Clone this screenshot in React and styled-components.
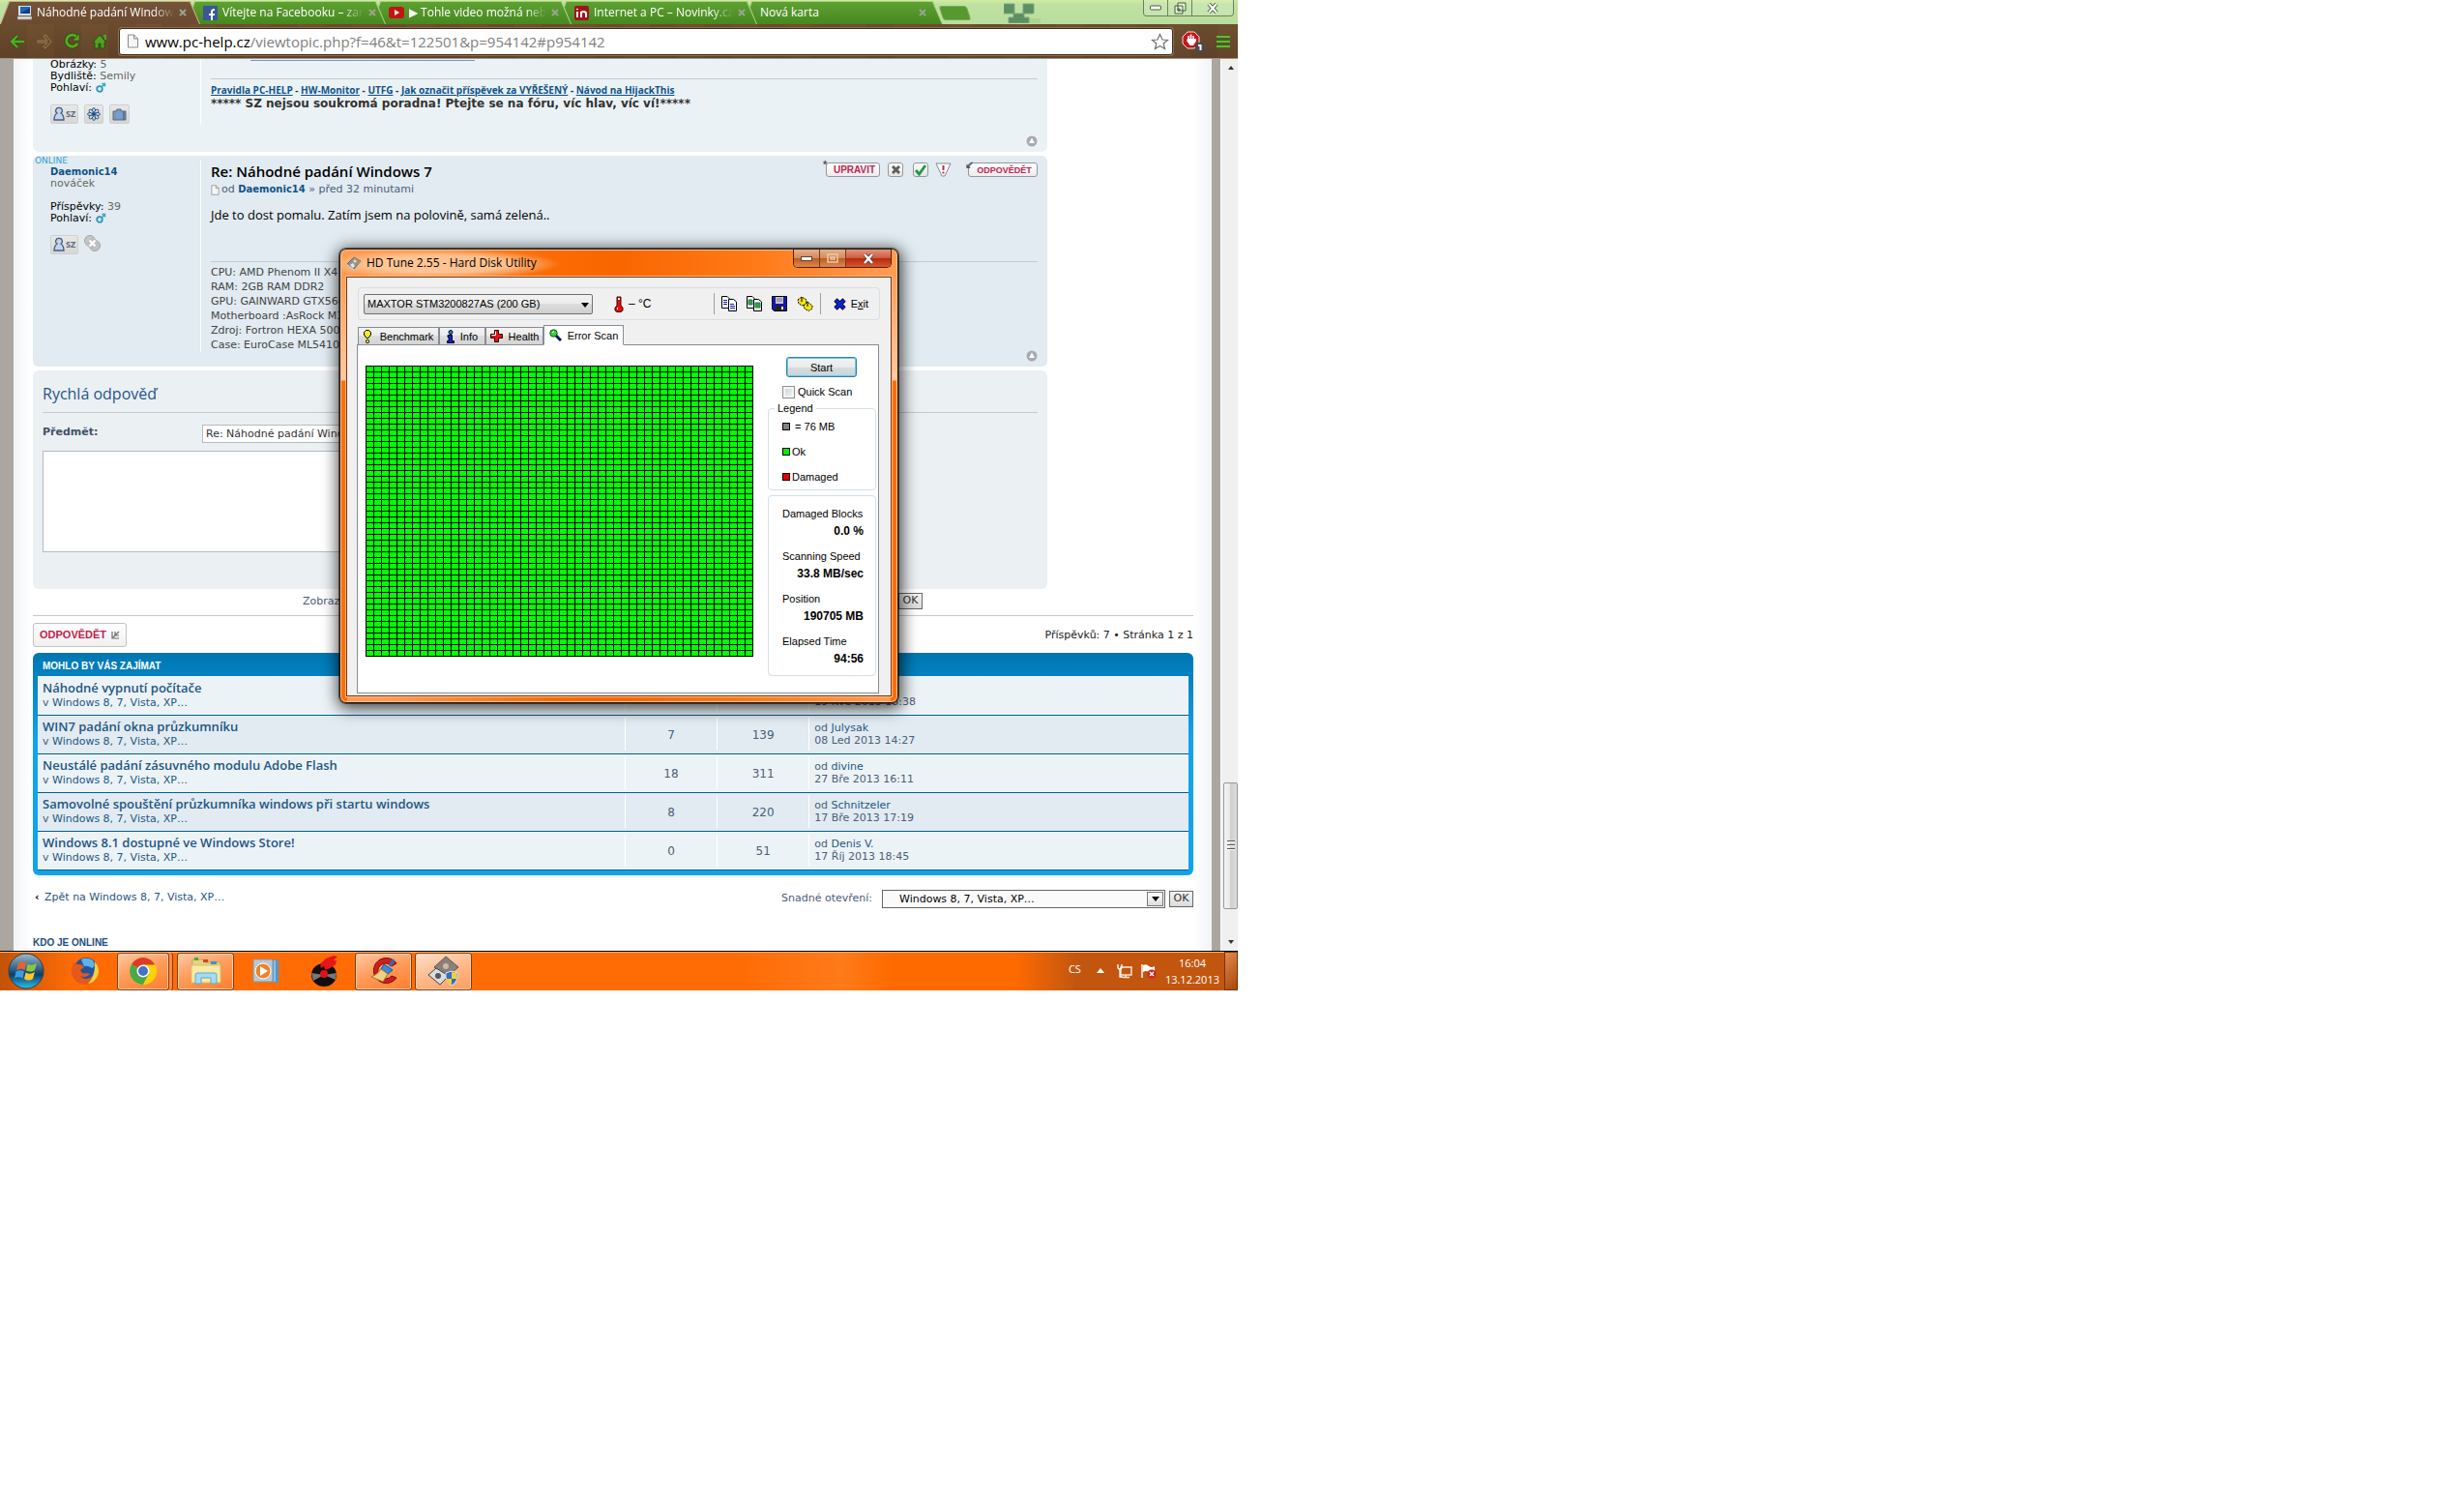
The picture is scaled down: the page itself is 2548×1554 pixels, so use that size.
import React from 'react';
import styled, { createGlobalStyle } from 'styled-components';

const verdana = '"DejaVu Sans", Verdana, sans-serif';
const segoe = '"Open Sans", "Noto Sans", sans-serif';
const arial = '"Liberation Sans", Arial, sans-serif';

const tabs = [
    { title: 'Náhodné padání Window', icon: 'pc', active: true },
    { title: 'Vítejte na Facebooku – zar', icon: 'facebook' },
    { title: '▶ Tohle video možná neb', icon: 'youtube' },
    { title: 'Internet a PC – Novinky.cz', icon: 'novinky' },
    { title: 'Nová karta' },
];

const topics = [
    { title: 'Náhodné vypnutí počítače', replies: '', views: '', author: '', date: '19 Kvě 2013 18:38' },
    { title: 'WIN7 padání okna průzkumníku', replies: 7, views: 139, author: 'Julysak', date: '08 Led 2013 14:27' },
    { title: 'Neustálé padání zásuvného modulu Adobe Flash', replies: 18, views: 311, author: 'divine', date: '27 Bře 2013 16:11' },
    { title: 'Samovolné spouštění průzkumníka windows při startu windows', replies: 8, views: 220, author: 'Schnitzeler', date: '17 Bře 2013 17:19' },
    { title: 'Windows 8.1 dostupné ve Windows Store!', replies: 0, views: 51, author: 'Denis V.', date: '17 Říj 2013 18:45' },
];

const stats = [
    ['Damaged Blocks', '0.0 %'],
    ['Scanning Speed', '33.8 MB/sec'],
    ['Position', '190705 MB'],
    ['Elapsed Time', '94:56'],
];

/* ---------- icons ---------- */

const TabIcon = ({ name }) => {
    if (name === 'pc') {
        return (
            <svg width="15" height="16" viewBox="0 0 15 16">
                <rect x="1" y="1" width="13" height="10" fill="#d8dde2" />
                <rect x="3" y="2" width="10" height="7" fill="#1d66b8" />
                <path d="M3 9L13 3V9Z" fill="#0d3f86" />
                <path d="M0 12H15V15H0Z" fill="#e8e8e8" stroke="#8c8c8c" />
            </svg>
        );
    }
    if (name === 'facebook') {
        return (
            <svg width="15" height="15" viewBox="0 0 15 15">
                <rect width="15" height="15" fill="#3a5896" />
                <path d="M9 15V9H12M6 9H9M9 9V6Q9 4 12 4" stroke="#fff" strokeWidth="2" fill="none" />
            </svg>
        );
    }
    if (name === 'youtube') {
        return (
            <svg width="16" height="14" viewBox="0 0 16 14">
                <rect y="1" width="16" height="12" rx="3" fill="#c4140f" />
                <path d="M6 4L11 7L6 10Z" fill="#fff" />
            </svg>
        );
    }
    return (
        <svg width="15" height="15" viewBox="0 0 15 15">
            <rect width="15" height="15" rx="2" fill="#a01520" />
            <path d="M3 6V12M3 3V4M7 12V6M7 8Q7 6 9 6Q12 6 12 8V12" stroke="#fff" strokeWidth="2" fill="none" />
        </svg>
    );
};

const TabCloseIcon = () => (
    <svg width="8" height="8" viewBox="0 0 8 8">
        <path d="M1 1L7 7M7 1L1 7" stroke="#98a590" strokeWidth="2" />
    </svg>
);
const BackIcon = () => (
    <svg width="16" height="16" viewBox="0 0 16 16">
        <path d="M8 2L2 8L8 14M2 8H15" stroke="#2b4d12" strokeWidth="4" fill="none" />
        <path d="M8 2L2 8L8 14M2 8H15" stroke="#55ab23" strokeWidth="2.4" fill="none" />
    </svg>
);
const ForwardIcon = () => (
    <svg width="16" height="16" viewBox="0 0 16 16">
        <path d="M1 7H11L7 2.500L9 1L15 8L9 15L7 13.500L11 9H1Z" stroke="#9a8058" fill="none" />
    </svg>
);
const ReloadIcon = () => (
    <svg width="17" height="17" viewBox="0 0 17 17">
        <path d="M13 4A6 6 0 1 0 14 11" stroke="#2b4d12" strokeWidth="4.4" fill="none" />
        <path d="M13 4A6 6 0 1 0 14 11" stroke="#55ab23" strokeWidth="2.8" fill="none" />
        <path d="M16 1V8H9Z" fill="#55ab23" stroke="#2b4d12" strokeWidth="0.6" />
    </svg>
);
const HomeIcon = () => (
    <svg width="16" height="16" viewBox="0 0 16 16">
        <path d="M8 1L15 9H13V15H9V10H7V15H3V9H1Z" fill="#4fa321" stroke="#2b4d12" />
        <path d="M12 2H14V6" stroke="#4fa321" strokeWidth="2" fill="none" />
    </svg>
);
const SheetIcon = ({ size }) => (
    <svg width={size} height={size + 2} viewBox="0 0 12 15">
        <path d="M1 1H7L11 5V14H1Z" fill="#f6f6f6" stroke="#8a8a8a" />
        <path d="M7 1V5H11" fill="none" stroke="#8a8a8a" />
    </svg>
);
const StarIcon = () => (
    <svg width="19" height="18" viewBox="0 0 19 18">
        <path d="M9.5 1.5L12 7L17.5 7.4L13.2 11L14.6 16.5L9.5 13.4L4.4 16.5L5.8 11L1.5 7.4L7 7Z" fill="#fff" stroke="#707070" strokeWidth="1.2" />
    </svg>
);
const BlockIcon = () => (
    <svg width="24" height="22" viewBox="0 0 24 22">
        <path d="M6 1H13L18 6V13L13 18H6L1 13V6Z" fill="#c8151b" stroke="#f2dcdc" />
        <path d="M7 9V5M9.500 9V3.500M12 9V5M14 11V8" stroke="#fff" strokeWidth="1.600" />
        <path d="M6 8H14.500V11L12 15H8.500L5 10Z" fill="#fff" />
        <rect x="14" y="12" width="10" height="10" rx="1" fill="#4a4a4a" />
        <path d="M17 15H19.500V20" stroke="#fff" strokeWidth="2" fill="none" />
    </svg>
);
const MenuIcon = () => (
    <svg width="14" height="16" viewBox="0 0 14 16">
        <path d="M0 3H14M0 8H14M0 13H14" stroke="#2b4d12" strokeWidth="4" />
        <path d="M0 3H14M0 8H14M0 13H14" stroke="#69b536" strokeWidth="2.4" />
    </svg>
);
const CreeperFace = () => (
    <svg width="38" height="21" viewBox="0 0 38 21">
        <path d="M38 16H18V21H38Z" fill="#a9cf8a" opacity="0.7" />
        <path d="M0 1H11V11H0ZM20 1H31V11H20ZM10 11H21V15H26V21H5V15H10Z" fill="#5c8f62" stroke="#7ea47e" />
    </svg>
);

const MaleIcon = () => (
    <svg width="11" height="11" viewBox="0 0 11 11">
        <circle cx="4" cy="7" r="2.800" fill="none" stroke="#2c93bd" strokeWidth="1.800" />
        <path d="M6 5L9.500 1.500M6.500 1.500H9.500V4.500" fill="none" stroke="#3aa7cf" strokeWidth="1.500" />
    </svg>
);
const PersonIcon = () => (
    <svg width="12" height="16" viewBox="0 0 12 16">
        <path d="M6 1.500A3 3 0 0 1 8 7Q11 9 11 14H1Q1 9 4 7A3 3 0 0 1 6 1.500Z" fill="#c3d4e8" stroke="#3f5f88" strokeWidth="1.300" />
    </svg>
);
const FlowerIcon = () => (
    <svg width="14" height="14" viewBox="0 0 14 14">
        {[0, 45, 90, 135, 180, 225, 270, 315].map((a) => (
            <ellipse key={a} cx="7" cy="3" rx="1.500" ry="2.400" fill="#cfdff0" stroke="#1f4677" strokeWidth="0.9" transform={`rotate(${a} 7 7)`} />
        ))}
        <circle cx="7" cy="7" r="1.400" fill="#1f4677" />
    </svg>
);
const CameraIcon = () => (
    <svg width="15" height="13" viewBox="0 0 15 13">
        <path d="M1 3H4L5 1H9L10 3H14V12H1Z" fill="#7f95b5" stroke="#5b6a80" />
        <circle cx="7" cy="7" r="3.500" fill="#6fa0dc" />
        <path d="M12 3V12" stroke="#46566e" />
    </svg>
);
const SkypeIcon = () => (
    <svg width="17" height="17" viewBox="0 0 17 17">
        <circle cx="6" cy="6" r="5.500" fill="#c7c7c7" stroke="#a5a5a5" />
        <circle cx="11" cy="11" r="5.500" fill="#c2c2c2" stroke="#a5a5a5" />
        <circle cx="8.500" cy="8.500" r="5.500" fill="#bdbdbd" />
        <path d="M5.500 5.500L11.500 11.500M11.500 5.500L5.500 11.500" stroke="#fff" strokeWidth="2.200" />
    </svg>
);
const TopIcon = () => (
    <svg width="12" height="12" viewBox="0 0 12 12">
        <circle cx="6" cy="6" r="5.500" fill="#a7abb0" />
        <path d="M6 2.500L9 8H3Z" fill="#fff" />
    </svg>
);
const CrossIcon = () => (
    <svg width="9" height="9" viewBox="0 0 9 9">
        <path d="M1 1L8 8M8 1L1 8" stroke="#5e5e5e" strokeWidth="3" />
    </svg>
);
const CheckIcon = () => (
    <svg width="12" height="12" viewBox="0 0 12 12">
        <path d="M1 6L4.500 10L11 1" stroke="#1f9a45" strokeWidth="2.800" fill="none" />
    </svg>
);
const ReportIcon = () => (
    <svg width="17" height="15" viewBox="0 0 17 15">
        <path d="M1 1H16L10 14H7Z" fill="#fff" stroke="#8b8b8b" strokeLinejoin="round" />
        <path d="M8.500 3V8M8.500 9.500V11.500" stroke="#c22552" strokeWidth="2" />
    </svg>
);
const ReplyArrow = () => (
    <svg width="9" height="9" viewBox="0 0 9 9">
        <path d="M1 1V8H8M2 7L8 1M4 1V5H8" stroke="#6d6d6d" fill="none" strokeWidth="1.200" />
    </svg>
);
const DownArrow = () => (
    <svg width="8" height="5" viewBox="0 0 8 5">
        <path d="M0 0H8L4 5Z" fill="#000" />
    </svg>
);
const DiskIcon = ({ size }) => (
    <svg width={size} height={size} viewBox="0 0 16 16">
        <path d="M1 9L8 2L15 6L8 14Z" fill="#8d9695" stroke="#5e6768" />
        <path d="M8 2L15 6L12 10L5 6Z" fill="#a98d78" />
        <circle cx="9" cy="6" r="1.500" fill="#e3ddd8" />
        <path d="M1 9L8 14V16L1 11Z" fill="#c5cdce" />
        <path d="M4 10L7 8L9 11L7 13Z" fill="#e4e9ea" />
    </svg>
);
const ThermoIcon = () => (
    <svg width="10" height="17" viewBox="0 0 10 17">
        <path d="M3 1H7V10L9 12V15L7 16.500H3L1 15V12L3 10Z" fill="#e01010" stroke="#400" />
        <path d="M4 2H6V4H4ZM3 12H4V14H3Z" fill="#fff" />
    </svg>
);
const CopyIcon = ({ picture }) => (
    <svg width="16" height="16" viewBox="0 0 16 16">
        <path d="M.5 .5H6L8.500 3V12.500H.5Z" fill="#fff" stroke="#000" />
        <path d="M7.500 3.500H12.500L15.500 6V15.500H7.500Z" fill="#fff" stroke="#000" />
        {picture ? (
            <path d="M2 4H6V9H2ZM9 7H14V12H9Z" fill="#35a33c" stroke="#2a7d5a" />
        ) : (
            <path d="M2 4.500H6M2 6.500H6M2 8.500H6M9 8.500H13M9 10.500H14M9 12.500H14" stroke="#1414a8" />
        )}
    </svg>
);
const SaveIcon = () => (
    <svg width="16" height="16" viewBox="0 0 16 16">
        <path d="M.5 .5H15.500V15.500H2.500L.5 13.500Z" fill="#1414b8" stroke="#000" />
        <rect x="4" y="1" width="8" height="7" fill="#c9c9c9" />
        <path d="M5 3H11M5 5H11" stroke="#777" />
        <rect x="4" y="10" width="9" height="5" fill="#222" />
        <rect x="10" y="11" width="2" height="3" fill="#fff" />
    </svg>
);
const OptionsIcon = () => (
    <svg width="17" height="16" viewBox="0 0 17 16">
        <path d="M1 4L5 1L10 4V8L6 10L2 8Z" fill="#f2e415" stroke="#000" strokeDasharray="2 1" />
        <path d="M7 10L11 6L16 10V13L12 15.500L8 13Z" fill="#f2e415" stroke="#000" strokeDasharray="2 1" />
        <path d="M5 1V6M11 6V11" stroke="#000" />
    </svg>
);
const ExitIcon = () => (
    <svg width="13" height="13" viewBox="0 0 13 13">
        <path d="M2 2L11 11M11 2L2 11" stroke="#000" strokeWidth="4.600" />
        <path d="M2 2L11 11M11 2L2 11" stroke="#0b22d8" strokeWidth="3" />
    </svg>
);
const BulbIcon = () => (
    <svg width="8" height="14" viewBox="0 0 8 14">
        <path d="M2.500 .5H5.500L7.500 2.500V5L5 8.500H3L.5 5V2.500Z" fill="#f6ec1d" stroke="#000" />
        <rect x="2.500" y="10.500" width="3" height="3" rx="1" fill="#f6ec1d" stroke="#000" />
    </svg>
);
const InfoIcon = () => (
    <svg width="8" height="14" viewBox="0 0 8 14">
        <circle cx="4" cy="2.500" r="2" fill="#1c8ed8" stroke="#002" />
        <path d="M1 5.500H5.500V11.500H7.500V13.500H.5V11.500H2V7.500H1Z" fill="#1420c8" stroke="#002" />
    </svg>
);
const HealthIcon = () => (
    <svg width="13" height="13" viewBox="0 0 13 13">
        <path d="M4.500 .5H8.500V4.500H12.500V8.500H8.500V12.500H4.500V8.500H.5V4.500H4.500Z" fill="#df1414" stroke="#300" />
        <path d="M5.500 1.500V5.500H1.500" stroke="#fff" fill="none" />
    </svg>
);
const ScanIcon = () => (
    <svg width="13" height="13" viewBox="0 0 13 13">
        <path d="M7 7L12 12" stroke="#0a1460" strokeWidth="3" />
        <circle cx="4.500" cy="4.500" r="3.700" fill="#32d23c" stroke="#0d4f12" />
        <path d="M3 4L5 2.500" stroke="#fff" />
    </svg>
);

/* ---------- taskbar icons ---------- */

const StartOrb = () => (
    <svg width="38" height="38" viewBox="0 0 38 38">
        <defs>
            <linearGradient id="orb" x1="0" y1="0" x2="0" y2="1">
                <stop offset="0" stopColor="#9fb8c8" />
                <stop offset="0.45" stopColor="#2f5f86" />
                <stop offset="0.6" stopColor="#0c3d68" />
                <stop offset="1" stopColor="#28c3ee" />
            </linearGradient>
        </defs>
        <circle cx="19" cy="19" r="18" fill="url(#orb)" stroke="#333b44" />
        <path d="M11 11Q15 8 19 11L17.500 18Q14 15 9 18Z" fill="#e8622a" />
        <path d="M20.500 12Q25 14 30 11L28 18Q24 21 19 18.500Z" fill="#8cc63f" />
        <path d="M8.500 19.500Q13 17 17 19.500L15.500 26.500Q11 24 7 26.500Z" fill="#3f9be0" />
        <path d="M18.500 20.500Q23 23 28 20L26 27Q22 30 17 27Z" fill="#fcc62b" />
    </svg>
);
const FirefoxIcon = () => (
    <svg width="30" height="30" viewBox="0 0 30 30">
        <circle cx="16" cy="13" r="12" fill="#24559c" />
        <path d="M11 3Q17 0 23 4Q27 10 22 12Q18 9 14 10Q12 6 11 3Z" fill="#5fb3e4" />
        <path d="M3 6Q5 8 8 8Q12 8 14 11L10 14Q12 19 17 17L20 18Q16 23 10 20Q14 25 20 22Q27 18 26 6Q31 14 28 21Q24 29 15 29Q3 28 1 17Q1 10 3 6Z" fill="#e4591a" />
        <path d="M25 5Q31 13 28 20Q25 27 18 28Q26 20 25 5Z" fill="#f6cf45" />
    </svg>
);
const ChromeIcon = () => (
    <svg width="30" height="30" viewBox="0 0 30 30">
        <circle cx="15" cy="15" r="14" fill="#fcd209" />
        <path d="M15 15L2.900 8A14 14 0 0 1 27.100 8Z" fill="#db3b2b" />
        <path d="M15 15L2.900 8A14 14 0 0 0 15 29L21 18Z" fill="#4aa84a" />
        <path d="M15 8H27.100L22 16Z" fill="#db3b2b" />
        <path d="M15 15L21 18L15 29A14 14 0 0 0 27.300 8.500H15Z" fill="#fcd209" />
        <circle cx="15" cy="15" r="6.500" fill="#fff" />
        <circle cx="15" cy="15" r="5" fill="#3f74c4" />
    </svg>
);
const FolderIcon = () => (
    <svg width="34" height="30" viewBox="0 0 34 30">
        <path d="M3 3H14L16 6H32V26H2Z" fill="#e9d27c" stroke="#c3a850" />
        <path d="M5 1H9V4H5Z" fill="#3fae49" />
        <path d="M14 3H19V6H14Z" fill="#d8402c" />
        <path d="M22 5H28V8H22Z" fill="#3f8fd6" />
        <path d="M2 9H32V27H2Z" fill="#f8eaa6" stroke="#d7c06c" />
        <path d="M6 28V19Q6 17 8 17H26Q28 17 28 19V28H22V22H12V28Z" fill="#a9daf3" stroke="#5aa9d3" />
    </svg>
);
const MediaIcon = () => (
    <svg width="28" height="26" viewBox="0 0 28 26">
        <path d="M18 2L27 1V25L18 24Z" fill="#4f98cf" />
        <path d="M20 2V24M23 2V24" stroke="#cfe6f6" />
        <rect x="1" y="1" width="20" height="23" rx="1" fill="#b9c9d4" stroke="#8097a6" />
        <circle cx="11" cy="13" r="8" fill="#f0822a" stroke="#fff" />
        <path d="M8 8L16 13L8 18Z" fill="#fff" />
    </svg>
);
const VinylIcon = () => (
    <svg width="30" height="32" viewBox="0 0 30 32">
        <ellipse cx="14" cy="20" rx="13" ry="12" fill="#120e0e" />
        <path d="M1 18L14 20L3 26ZM27 18L14 20L26 25Z" fill="#777" />
        <ellipse cx="14" cy="19" rx="4" ry="4" fill="#e01218" />
        <path d="M11 13Q9 8 13 6L16 3L24 0L28 1L24 5L27 5L26 9L22 12Q17 15 15 14L14 11Z" fill="#e8141a" />
    </svg>
);
const CleanerIcon = () => (
    <svg width="32" height="32" viewBox="0 0 32 32">
        <path d="M29 8A13 13 0 1 0 29 23L24 21A8 8 0 1 1 24 11Z" fill="#cc1f1f" stroke="#7c0d0d" />
        <path d="M26 4L22 11" stroke="#2a6cc0" strokeWidth="3" />
        <path d="M16 9L25 15L20 19L13 14Z" fill="#3b8bdc" stroke="#1d559c" />
        <path d="M13 14L20 19L15 27L3 22Q9 20 13 14Z" fill="#f1cf83" stroke="#a87a2c" />
    </svg>
);
const HdTuneIcon = () => (
    <svg width="34" height="32" viewBox="0 0 34 32">
        <path d="M7 12L19 1L32 12L20 22Z" fill="#8b8078" stroke="#5d5651" />
        <circle cx="19" cy="11" r="3" fill="#cdb9a9" />
        <path d="M1 20L9 13L22 21L13 30Z" fill="#d7dcde" stroke="#3f4447" />
        <circle cx="11" cy="21" r="3" fill="#53595d" />
        <path d="M19 18L25 16L31 18Q32 27 25 31Q18 27 19 18Z" fill="#2d6fc9" stroke="#dfe6ee" />
        <path d="M25 17V24H31Q30 20 30 18ZM19 24H25V30Q20 28 19 24Z" fill="#f6cf2d" />
    </svg>
);
const NetworkIcon = () => (
    <svg width="17" height="16" viewBox="0 0 17 16">
        <path d="M4 4H15V12H4ZM9 12V14M6 14.500H13" fill="none" stroke="#f4e6da" strokeWidth="1.500" />
        <path d="M1 1V4Q1 6 3 6Q5 6 5 4V1M3 6V14H6" fill="none" stroke="#fff" strokeWidth="1.300" />
    </svg>
);
const FlagIcon = () => (
    <svg width="17" height="16" viewBox="0 0 17 16">
        <path d="M2 1V15" stroke="#fff" strokeWidth="1.500" />
        <path d="M3 2Q7 0 9 3Q12 5 15 3V9Q12 11 9 9Q6 7 3 9Z" fill="#fff" />
        <circle cx="12" cy="11" r="4.500" fill="#d4201e" />
        <path d="M10 9L14 13M14 9L10 13" stroke="#fff" strokeWidth="1.500" />
    </svg>
);

/* ---------- page ---------- */

function App() {
    return (
        <>
            <GlobalStyle />
            <DesktopStyled>
                <Browser />
                <Taskbar />
                <HdTune />
            </DesktopStyled>
        </>
    );
}

const Browser = () => (
    <main>
        <TabStripStyled>
            {tabs.map((tab, i) => (
                <TabStyled key={tab.title} $active={tab.active} $order={tabs.length - i}>
                    {tab.icon && <TabIcon name={tab.icon} />}
                    <span className={tab.icon ? 'title fade' : 'title'}>{tab.title}</span>
                    <button type="button" aria-label="Zavřít kartu"><TabCloseIcon /></button>
                </TabStyled>
            ))}
            <NewTabButton type="button" aria-label="Nová karta" />
            <CreeperFace />
            <WindowButtons>
                <button type="button" aria-label="Minimalizovat">
                    <svg width="12" height="6" viewBox="0 0 12 6"><rect x=".5" y="1" width="11" height="4" rx="1" fill="#fff" stroke="#4b5a41" /></svg>
                </button>
                <button type="button" aria-label="Obnovit">
                    <svg width="13" height="13" viewBox="0 0 13 13">
                        <path d="M4 1H12V9H4ZM1 4H9V12H1ZM4 7H6V9H4Z" fill="#e4f4d8" stroke="#4b5a41" />
                    </svg>
                </button>
                <button type="button" aria-label="Zavřít">
                    <svg width="12" height="11" viewBox="0 0 12 11">
                        <path d="M2 1L10 10M10 1L2 10" stroke="#4b5a41" strokeWidth="4" />
                        <path d="M2 1L10 10M10 1L2 10" stroke="#fff" strokeWidth="2.200" />
                    </svg>
                </button>
            </WindowButtons>
        </TabStripStyled>
        <ToolbarStyled>
            <NavButton type="button" aria-label="Zpět"><BackIcon /></NavButton>
            <NavButton type="button" aria-label="Vpřed"><ForwardIcon /></NavButton>
            <NavButton type="button" aria-label="Načíst znovu"><ReloadIcon /></NavButton>
            <NavButton type="button" aria-label="Domů"><HomeIcon /></NavButton>
            <OmniboxStyled>
                <SheetIcon size={13} />
                <p><b>www.pc-help.cz</b>/viewtopic.php?f=46&amp;t=122501&amp;p=954142#p954142</p>
                <StarIcon />
            </OmniboxStyled>
            <NavButton type="button" aria-label="Blokování"><BlockIcon /></NavButton>
            <NavButton type="button" aria-label="Nabídka"><MenuIcon /></NavButton>
        </ToolbarStyled>
        <ViewportStyled>
            <BandStyled $width={14} />
            <SheetStyled>
                <Forum />
            </SheetStyled>
            <BandStyled $width={9} />
            <ScrollbarStyled>
                <svg width="6" height="4" viewBox="0 0 6 4"><path d="M3 0L6 4H0Z" fill="#333" /></svg>
                <div className="track">
                    <div className="thumb"><i /><i /><i /></div>
                </div>
                <svg width="6" height="4" viewBox="0 0 6 4"><path d="M0 0H6L3 4Z" fill="#333" /></svg>
            </ScrollbarStyled>
        </ViewportStyled>
    </main>
);

const Forum = () => (
    <>
        <PostsStyled>
            <PostStyled $first>
                <ProfileStyled $first>
                    <p><b>Obrázky:</b> 5</p>
                    <p><b>Bydliště:</b> Semily</p>
                    <p><b>Pohlaví:</b> <MaleIcon /></p>
                    <ContactStyled>
                        <ChipButton type="button"><PersonIcon />SZ</ChipButton>
                        <ChipButton type="button" aria-label="ICQ"><FlowerIcon /></ChipButton>
                        <ChipButton type="button" aria-label="Galerie"><CameraIcon /></ChipButton>
                    </ContactStyled>
                </ProfileStyled>
                <BodyStyled $first>
                    <CutLine />
                    <SignatureStyled $first>
                        <p className="links">
                            <a href="#pravidla">Pravidla PC-HELP</a> - <a href="#hw">HW-Monitor</a> - <a href="#utfg">UTFG</a> - <a href="#jak">Jak označit příspěvek za VYŘEŠENÝ</a> - <a href="#navod">Návod na HijackThis</a>
                        </p>
                        <p className="motto">***** SZ nejsou soukromá poradna! Ptejte se na fóru, víc hlav, víc ví!*****</p>
                    </SignatureStyled>
                </BodyStyled>
                <TopLink href="#top" aria-label="Nahoru"><TopIcon /></TopLink>
            </PostStyled>

            <PostStyled>
                <ProfileStyled>
                    <OnlineStyled>ONLINE</OnlineStyled>
                    <p><a href="#daemonic14">Daemonic14</a></p>
                    <p>nováček</p>
                    <br />
                    <p><b>Příspěvky:</b> 39</p>
                    <p><b>Pohlaví:</b> <MaleIcon /></p>
                    <ContactStyled>
                        <ChipButton type="button"><PersonIcon />SZ</ChipButton>
                        <SkypeIcon />
                    </ContactStyled>
                </ProfileStyled>
                <BodyStyled>
                    <PostHeadStyled>
                        <h3>Re: Náhodné padání Windows 7</h3>
                        <PostActions>
                            <TextChip type="button" $mark="*">UPRAVIT</TextChip>
                            <SquareChip type="button" aria-label="Smazat"><CrossIcon /></SquareChip>
                            <SquareChip type="button" aria-label="Vyřešeno"><CheckIcon /></SquareChip>
                            <PlainButton type="button" aria-label="Nahlásit"><ReportIcon /></PlainButton>
                            <TextChip type="button" $mark="↙" $wide>ODPOVĚDĚT</TextChip>
                        </PostActions>
                    </PostHeadStyled>
                    <p className="author"><SheetIcon size={9} /><span>od <a href="#daemonic14">Daemonic14</a> » před 32 minutami</span></p>
                    <p className="content">Jde to dost pomalu. Zatím jsem na polovině, samá zelená..</p>
                    <SignatureStyled>
                        <p>CPU: AMD Phenom II X4</p>
                        <p>RAM: 2GB RAM DDR2</p>
                        <p>GPU: GAINWARD GTX560</p>
                        <p>Motherboard :AsRock M3</p>
                        <p>Zdroj: Fortron HEXA 500</p>
                        <p>Case: EuroCase ML5410</p>
                    </SignatureStyled>
                </BodyStyled>
                <TopLink href="#top" aria-label="Nahoru"><TopIcon /></TopLink>
            </PostStyled>

            <QuickReplyStyled>
                <h2>Rychlá odpověď</h2>
                <div className="subject">
                    <label htmlFor="subject">Předmět:</label>
                    <input id="subject" type="text" defaultValue="Re: Náhodné padání Windows 7" />
                </div>
                <textarea aria-label="Zpráva" />
            </QuickReplyStyled>
        </PostsStyled>

        <SortRowStyled>
            <label htmlFor="sort">Zobrazit příspěvky za předchozí:</label>
            <select id="sort"><option>Všechny příspěvky</option></select>
            <OkButton type="button">OK</OkButton>
        </SortRowStyled>

        <ActionsRowStyled>
            <ReplyButton type="button">ODPOVĚDĚT <ReplyArrow /></ReplyButton>
            <span>Příspěvků: 7 • Stránka 1 z 1</span>
        </ActionsRowStyled>

        <TopicsStyled>
            <table>
                <colgroup>
                    <col width="51%" />
                    <col width="8%" />
                    <col width="8%" />
                    <col width="33%" />
                </colgroup>
                <thead>
                    <tr><th colSpan="4">MOHLO BY VÁS ZAJÍMAT</th></tr>
                </thead>
                <tbody>
                    {topics.map((topic) => (
                        <tr key={topic.title}>
                            <td>
                                <a className="topic" href="#topic">{topic.title}</a>
                                <p>v <a href="#forum">Windows 8, 7, Vista, XP…</a></p>
                            </td>
                            <td><div className="count">{topic.replies}</div></td>
                            <td><div className="count">{topic.views}</div></td>
                            <td>
                                <div className="last">
                                    <p>od <a href="#user">{topic.author}</a></p>
                                    <p>{topic.date}</p>
                                </div>
                            </td>
                        </tr>
                    ))}
                </tbody>
            </table>
        </TopicsStyled>

        <FooterRowStyled>
            <a href="#forum"><b>‹</b> Zpět na Windows 8, 7, Vista, XP…</a>
            <div className="jump">
                <label htmlFor="jump">Snadné otevření:</label>
                <JumpBox>
                    <select id="jump"><option>Windows 8, 7, Vista, XP…</option></select>
                    <span><DownArrow /></span>
                </JumpBox>
                <OkButton type="button">OK</OkButton>
            </div>
        </FooterRowStyled>
        <OnlineHeading>KDO JE ONLINE</OnlineHeading>
    </>
);

const HdTune = () => (
    <DialogStyled>
        <TitleBarStyled>
            <DiskIcon size={16} />
            <h1>HD Tune 2.55 - Hard Disk Utility</h1>
            <DialogButtons>
                <button type="button" aria-label="Minimize">
                    <svg width="12" height="6" viewBox="0 0 12 6"><rect x=".5" y="1.500" width="11" height="4" fill="#fff" stroke="#5c4438" /></svg>
                </button>
                <button type="button" aria-label="Maximize" disabled>
                    <svg width="12" height="10" viewBox="0 0 12 10"><path d="M1 1H11V9H1ZM4 4H8V6H4Z" fill="none" stroke="#f0c7a6" strokeWidth="1.500" /></svg>
                </button>
                <button type="button" className="close" aria-label="Close">
                    <svg width="12" height="11" viewBox="0 0 12 11">
                        <path d="M2 1L10 10M10 1L2 10" stroke="#5a3a3a" strokeWidth="4" />
                        <path d="M2 1L10 10M10 1L2 10" stroke="#fff" strokeWidth="2.400" />
                    </svg>
                </button>
            </DialogButtons>
        </TitleBarStyled>
        <ClientStyled>
            <DriveBarStyled>
                <DriveBox>
                    <select aria-label="Drive"><option>MAXTOR STM3200827AS (200 GB)</option></select>
                    <span><DownArrow /></span>
                </DriveBox>
                <div className="temperature"><ThermoIcon /> – °C</div>
                <PlainButton type="button" aria-label="Copy text"><CopyIcon /></PlainButton>
                <PlainButton type="button" aria-label="Copy picture"><CopyIcon picture /></PlainButton>
                <PlainButton type="button" aria-label="Save"><SaveIcon /></PlainButton>
                <PlainButton type="button" aria-label="Options"><OptionsIcon /></PlainButton>
                <ExitButton type="button"><ExitIcon /><span>E<u>x</u>it</span></ExitButton>
            </DriveBarStyled>
            <DialogTabs>
                <DialogTab type="button" $width={84}><BulbIcon />Benchmark</DialogTab>
                <DialogTab type="button" $width={48}><InfoIcon />Info</DialogTab>
                <DialogTab type="button" $width={60}><HealthIcon />Health</DialogTab>
                <DialogTab type="button" $width={83} $active><ScanIcon />Error Scan</DialogTab>
            </DialogTabs>
            <ScanPanel>
                <BlockMap />
                <aside>
                    <StartButton type="button">Start</StartButton>
                    <CheckLabel><input type="checkbox" />Quick Scan</CheckLabel>
                    <LegendStyled>
                        <legend>Legend</legend>
                        <ul>
                            <li><Swatch $color="#808080" />&nbsp;= 76 MB</li>
                            <li><Swatch $color="#00f000" />Ok</li>
                            <li><Swatch $color="#e80000" />Damaged</li>
                        </ul>
                    </LegendStyled>
                    <StatsStyled>
                        {stats.map(([name, value]) => (
                            <React.Fragment key={name}>
                                <dt>{name}</dt>
                                <dd>{value}</dd>
                            </React.Fragment>
                        ))}
                    </StatsStyled>
                </aside>
            </ScanPanel>
        </ClientStyled>
    </DialogStyled>
);

const Taskbar = () => (
    <TaskbarStyled>
        <TaskButton type="button" $width={54} aria-label="Start"><StartOrb /></TaskButton>
        <TaskButton type="button" $width={67} aria-label="Firefox"><FirefoxIcon /></TaskButton>
        <TaskButton type="button" $width={54} $open $stacked aria-label="Chrome"><ChromeIcon /></TaskButton>
        <TaskButton type="button" $width={59} $open aria-label="Explorer"><FolderIcon /></TaskButton>
        <TaskButton type="button" $width={60} aria-label="Media Player"><MediaIcon /></TaskButton>
        <TaskButton type="button" $width={62} aria-label="Virtual DJ"><VinylIcon /></TaskButton>
        <TaskButton type="button" $width={59} $open aria-label="CCleaner"><CleanerIcon /></TaskButton>
        <TaskButton type="button" $width={59} $open $focused aria-label="HD Tune"><HdTuneIcon /></TaskButton>
        <TrayStyled>
            <span className="lang">CS</span>
            <svg width="8" height="5" viewBox="0 0 8 5"><path d="M4 0L8 5H0Z" fill="#fff" /></svg>
            <NetworkIcon />
            <FlagIcon />
            <time>16:04<br />13.12.2013</time>
            <ShowDesktop type="button" aria-label="Zobrazit plochu" />
        </TrayStyled>
    </TaskbarStyled>
);

/* ---------- styles ---------- */

const GlobalStyle = createGlobalStyle`
    * {
        box-sizing: border-box;
    }

    body {
        margin: 0;
        background: #fff;
        font-family: ${verdana};
    }

    h1, h2, h3, p, ul, dl, dd {
        margin: 0;
        padding: 0;
    }

    button, input, select, textarea {
        font-family: inherit;
        padding: 0;
        margin: 0;
    }

    svg {
        display: block;
        flex: none;
    }
`;

const DesktopStyled = styled.div`
    position: relative;
    width: 100%;
    max-width: 1280px;
    overflow: hidden;
`;

const PlainButton = styled.button`
    display: flex;
    border: none;
    background: none;
`;

const TabStripStyled = styled.div`
    display: flex;
    align-items: flex-start;
    height: 25px;
    background: linear-gradient(#d3ec9c, #bfe2a4 4px, #b9dd9c);

    > svg {
        margin: 3px 0 0 36px;
    }
`;

const TabStyled = styled.div`
    position: relative;
    z-index: ${(props) => props.$order};
    display: flex;
    align-items: center;
    gap: 5px;
    width: 207px;
    height: 24px;
    margin: 1px -15px 0 0;
    padding: 0 17px 0 18px;
    background: ${(props) => (props.$active ? '#c9b08d' : '#a9d184')};
    clip-path: polygon(0 100%, 9px 0, calc(100% - 10px) 0, 100% 100%);
    font: 12px/22px ${segoe};
    color: #fff;

    &::before {
        content: '';
        position: absolute;
        inset: 0;
        background: ${(props) => (props.$active ? 'linear-gradient(#74543a, #6b4a2f)' : 'linear-gradient(#5ea233, #47881f)')};
        clip-path: polygon(1px 100%, 10px 1px, calc(100% - 11px) 1px, calc(100% - 1px) 100%);
    }

    > * {
        position: relative;
    }

    .title {
        flex: none;
        white-space: nowrap;
    }

    .fade {
        mask-image: linear-gradient(90deg, #000 85%, transparent);
    }

    button {
        width: 8px;
        margin-left: auto;
        border: none;
        background: none;
    }
`;

const NewTabButton = styled.button`
    width: 29px;
    height: 15px;
    margin: 6px 0 0 13px;
    border: 1px solid #76ad52;
    border-radius: 3px;
    background: #56992e;
    transform: skewX(18deg);
`;

const WindowButtons = styled.div`
    display: flex;
    height: 17px;
    margin: 0 4px 0 auto;
    border: 1px solid #6b8259;
    border-top: none;
    border-radius: 0 0 4px 4px;

    button {
        display: flex;
        align-items: center;
        justify-content: center;
        width: 25px;
        border: none;
        border-right: 1px solid #6b8259;
        background: rgba(255, 255, 255, 0.15);
    }

    button:last-child {
        width: 42px;
        border-right: none;
    }
`;

const ToolbarStyled = styled.div`
    display: flex;
    align-items: center;
    gap: 12px;
    height: 36px;
    padding: 0 8px 0 10px;
    border-bottom: 1px solid #a29688;
    background:
        linear-gradient(90deg, rgba(0, 0, 0, 0.05) 50%, transparent 50%) 0 0 / 56px 100%,
        linear-gradient(#70502f, #64452b);
`;

const NavButton = styled(PlainButton)`
    align-items: center;
    justify-content: center;
`;

const OmniboxStyled = styled.div`
    display: flex;
    flex: 1;
    align-items: center;
    gap: 6px;
    height: 28px;
    margin-right: -3px;
    padding: 0 3px 0 7px;
    border: 1px solid #3f2a18;
    border-radius: 3px;
    background: #fff;
    box-shadow: 0 0 0 1px #8a7052;

    p {
        flex: 1;
        overflow: hidden;
        font: 15px/24px ${segoe};
        white-space: nowrap;
        color: #808080;
    }

    b {
        font-weight: normal;
        color: #000;
    }
`;

const ViewportStyled = styled.div`
    display: flex;
    overflow: hidden;
`;

const BandStyled = styled.div`
    width: ${(props) => props.$width}px;
    background: #aba69f;
`;

const SheetStyled = styled.div`
    flex: 1;
    min-width: 0;
    padding: 0 19px 0 20px;
    background: linear-gradient(90deg, #f1f3f6, #fff 18px, #fff calc(100% - 18px), #f1f3f6);
`;

const ScrollbarStyled = styled.div`
    display: flex;
    flex-direction: column;
    align-items: center;
    justify-content: space-between;
    width: 18px;
    padding: 7px 0 7px 2px;
    border-left: 1px solid #fff;
    background: #f0f0f0;

    .track {
        display: flex;
        flex: 1;
        align-items: flex-end;
        width: 100%;
        padding-bottom: 32px;
    }

    .thumb {
        display: flex;
        flex-direction: column;
        gap: 2px;
        align-items: center;
        justify-content: center;
        width: 100%;
        height: 15%;
        border: 1px solid #979797;
        border-radius: 2px;
        background: linear-gradient(90deg, #f5f5f5, #e6e6e6 50%, #cfcfcf 50%, #dcdcdc);
    }

    i {
        width: 8px;
        height: 2px;
        background: #555;
        border-bottom: 1px solid #fff;
    }
`;

const PostsStyled = styled.div`
    display: flex;
    flex-direction: column;
    gap: 4px;
    margin-right: 151px;
`;

const PostStyled = styled.article`
    position: relative;
    display: flex;
    min-height: ${(props) => (props.$first ? 96 : 218)}px;
    padding: ${(props) => (props.$first ? '0 10px 28px 0' : '5px 10px 15px 0')};
    border-radius: ${(props) => (props.$first ? '0 0 6px 6px' : '6px')};
    background: ${(props) => (props.$first ? '#ebf2f5' : '#e1ebf1')};
`;

const ProfileStyled = styled.div`
    position: relative;
    width: 173px;
    padding: ${(props) => (props.$first ? 0 : 6)}px 0 0 18px;
    font-size: 11px;
    line-height: 12px;
    color: #666;

    p svg {
        display: inline-block;
        vertical-align: top;
    }

    p {
        height: 12px;
    }

    b {
        font-weight: normal;
        color: #000;
    }

    a {
        font-size: 10px;
        font-weight: bold;
        color: #105289;
        text-decoration: none;
    }
`;

const OnlineStyled = styled.span`
    position: absolute;
    top: -5px;
    left: 2px;
    font: 9px/10px ${verdana};
    color: #2f9fd6;
`;

const ContactStyled = styled.div`
    display: flex;
    gap: 6px;
    margin-top: 11px;
`;

const ChipButton = styled.button`
    display: flex;
    align-items: center;
    justify-content: center;
    gap: 1px;
    min-width: 20px;
    height: 20px;
    padding: 0 2px;
    border: 1px solid #cfcfcf;
    border-radius: 2px;
    background: linear-gradient(#e8e8e6, #d6d6d4);
    font: bold 9px/18px ${segoe};
    color: #5c6b80;
`;

const BodyStyled = styled.div`
    flex: 1;
    padding: ${(props) => (props.$first ? '0 0 0 10px' : '2px 0 0 10px')};
    border-left: 1px solid #fff;

    a {
        font-weight: bold;
        color: #105289;
        text-decoration: none;
    }

    .author {
        display: flex;
        gap: 2px;
        align-items: center;
        margin-top: 4px;
        font-size: 11px;
        line-height: 14px;
        color: #4c5d77;
        white-space: nowrap;
    }

    .author a {
        font-size: 10px;
    }

    .content {
        margin-top: 9px;
        min-height: 58px;
        font: 13px/20px ${segoe};
        color: #000;
    }
`;

const CutLine = styled.div`
    width: 232px;
    height: 2px;
    margin: 0 0 18px 41px;
    border-bottom: 1px solid #6f9ac0;
`;

const SignatureStyled = styled.div`
    padding-top: ${(props) => (props.$first ? 4 : 3)}px;
    border-top: 1px solid #c5ccd1;
    font-size: 11px;
    line-height: 15px;
    color: #444;

    .links {
        font: bold 10px/14px ${segoe};
        color: #333;
    }

    .links a {
        text-decoration: underline;
    }

    .motto {
        font-size: 12px;
        font-weight: bold;
        line-height: 14px;
        color: #333;
    }
`;

const PostHeadStyled = styled.div`
    display: flex;
    align-items: flex-start;
    justify-content: space-between;
    height: 17px;

    h3 {
        font: 600 15px/19px ${segoe};
        color: #000;
    }
`;

const PostActions = styled.div`
    display: flex;
    align-items: center;
`;

const TextChip = styled.button`
    position: relative;
    width: ${(props) => (props.$wide ? 72 : 56)}px;
    height: 15px;
    margin-left: ${(props) => (props.$wide ? 17 : 0)}px;
    padding-left: 3px;
    border: 1px solid #979797;
    border-radius: 3px;
    background: linear-gradient(#fff, #ececec);
    font: bold ${(props) => (props.$wide ? 9 : 10)}px/12px ${arial};
    color: #c22552;

    &::before {
        content: '${(props) => props.$mark}';
        position: absolute;
        top: -4px;
        left: -4px;
        font-size: 11px;
        line-height: 10px;
        color: #555;
    }
`;

const SquareChip = styled.button`
    display: flex;
    align-items: center;
    justify-content: center;
    width: 16px;
    height: 15px;
    margin: 0 2px 0 8px;
    border: 1px solid #979797;
    border-radius: 3px;
    background: linear-gradient(#fff, #e4e4e4);

    & + ${PlainButton} {
        margin-left: 5px;
    }
`;

const TopLink = styled.a`
    position: absolute;
    right: 10px;
    bottom: 5px;
`;

const QuickReplyStyled = styled.section`
    padding: 14px 10px 38px;
    border-radius: 6px;
    background: #ebf0f3;

    h2 {
        padding-bottom: 8px;
        border-bottom: 1px solid #c5cace;
        font: 16px/21px ${segoe};
        color: #28548c;
    }

    .subject {
        display: flex;
        gap: 12px;
        margin: 12px 0 8px;
        font-size: 11px;
        line-height: 16px;
        color: #425067;
    }

    label {
        width: 153px;
        font-weight: bold;
    }

    input {
        width: 45%;
        height: 19px;
        padding: 0 3px;
        border: 1px solid #b4bac0;
        background: #fff;
        font-size: 11px;
        color: #333;
    }

    textarea {
        display: block;
        width: 72%;
        height: 105px;
        border: 1px solid #b4bac0;
        background: #fff;
        resize: none;
    }
`;

const OkButton = styled.button`
    width: 25px;
    height: 17px;
    border: 1px solid #666;
    background: linear-gradient(#f3f3f3, #dcdcdc);
    font-size: 11px;
    line-height: 14px;
    color: #333;
`;

const SortRowStyled = styled.div`
    display: flex;
    align-items: center;
    gap: 5px;
    height: 28px;
    padding: 0 280px 3px 279px;
    border-bottom: 1px solid #c5cace;
    font-size: 11px;
    color: #4c5d77;

    select {
        flex: 1;
        height: 19px;
    }
`;

const ActionsRowStyled = styled.div`
    display: flex;
    align-items: center;
    justify-content: space-between;
    height: 38px;
    font-size: 11px;
    color: #222;
`;

const ReplyButton = styled.button`
    display: flex;
    align-items: center;
    gap: 5px;
    height: 25px;
    padding: 0 6px;
    border: 1px solid #c3c3c3;
    border-radius: 3px;
    background: linear-gradient(#fff, #f0f0f0);
    font: 900 11px/20px ${arial};
    color: #c01d4c;
`;

const TopicsStyled = styled.section`
    padding: 0 5px 5px;
    border-radius: 6px;
    background: linear-gradient(#0076b1, #12a3eb 90px);

    table {
        width: 100%;
        border-collapse: collapse;
        table-layout: fixed;
    }

    th {
        height: 24px;
        padding: 3px 5px 0;
        font: bold 10px/16px ${arial};
        text-align: left;
        color: #fff;
    }

    td {
        height: 40px;
        padding: 0;
        border-bottom: 1px solid #00608f;
        font-size: 11px;
        line-height: 13px;
        color: #4c5d77;
    }

    td:first-child {
        padding: 0 0 3px 5px;
    }

    tr {
        background: #ecf3f6;
    }

    tbody tr:nth-child(even) {
        background: #e1ebf1;
    }

    thead tr {
        background: none;
    }

    a {
        color: #1f5685;
        text-decoration: none;
    }

    .topic {
        display: block;
        font: 600 13px/18px ${segoe};
    }

    .count {
        height: 34px;
        border-left: 1px solid #fff;
        font-size: 12px;
        line-height: 36px;
        text-align: center;
    }

    .last {
        height: 34px;
        padding: 4px 0 0 5px;
        border-left: 1px solid #fff;
    }
`;

const FooterRowStyled = styled.div`
    display: flex;
    align-items: flex-start;
    justify-content: space-between;
    padding-top: 15px;
    font-size: 11px;
    line-height: 16px;
    color: #4c5d77;

    a {
        padding-left: 2px;
        color: #1f5685;
        text-decoration: none;
    }

    b {
        margin-right: 2px;
        color: #000;
    }

    .jump {
        display: flex;
        align-items: center;
        gap: 4px;
    }

    label {
        margin-right: 6px;
    }
`;

const JumpBox = styled.div`
    position: relative;
    width: 293px;

    select {
        display: block;
        width: 100%;
        height: 19px;
        padding-left: 17px;
        border: 1px solid #666;
        background: #fafafa;
        font-size: 11px;
        color: #000;
        appearance: none;
    }

    span {
        position: absolute;
        top: 2px;
        right: 2px;
        display: flex;
        align-items: center;
        justify-content: center;
        width: 17px;
        height: 15px;
        border: 1px solid #777;
        background: linear-gradient(#fff, #ddd);
        pointer-events: none;
    }
`;

const OnlineHeading = styled.h3`
    padding-top: 27px;
    font: bold 10px/17px ${arial};
    color: #1c4d80;
`;

const DialogStyled = styled.section`
    position: absolute;
    top: 257px;
    left: 351px;
    z-index: 10;
    width: 578px;
    padding: 0 6px 6px;
    border: 1px solid #2e1503;
    border-radius: 7px;
    background:
        radial-gradient(ellipse at 45% 50%, rgba(255, 205, 160, 0.85) 40%, transparent 70%) 0 0 / 230px 30px no-repeat,
        linear-gradient(#ff9d55, #ffc9a0 105px, #ff6d05 106px) 0 30px / 7px 100% no-repeat,
        linear-gradient(#ff9d55, #ffc9a0 105px, #ff6d05 106px) 100% 30px / 7px 100% no-repeat,
        linear-gradient(90deg, #ff9b52 8%, #fb6a04 38%, #f96600 50%, #ff7a18 75%, #ff9d55);
    box-shadow: inset 0 0 0 1px #ffc59a, 0 0 0 1px rgba(0, 0, 0, 0.5), 1px 3px 16px 3px rgba(0, 0, 0, 0.7);
    font: 11px/14px ${arial};
    color: #000;
`;

const TitleBarStyled = styled.header`
    display: flex;
    align-items: flex-start;
    height: 28px;
    gap: 5px;

    > svg {
        margin-top: 6px;
    }

    h1 {
        font: 12px/28px ${segoe};
    }
`;

const DialogButtons = styled.div`
    display: flex;
    height: 19px;
    margin-left: auto;
    border: 1px solid #5c1d05;
    border-top: none;
    border-radius: 0 0 5px 5px;
    overflow: hidden;

    button {
        display: flex;
        align-items: center;
        justify-content: center;
        width: 27px;
        border: none;
        border-right: 1px solid #7a3a1a;
        background: linear-gradient(#e8b08a, #d18a5c 50%, #b85c22 50%, #dd8850);
    }

    .close {
        width: 46px;
        border-right: none;
        background: linear-gradient(#e0957f, #cf5a3f 50%, #b32a0c 50%, #d9562b);
    }
`;

const ClientStyled = styled.div`
    padding: 10px 11px 2px 10px;
    border: 1px solid #7c3208;
    background: #f0f0f0;
    box-shadow: 0 0 0 1px #ffc08f;
`;

const DriveBarStyled = styled.div`
    display: flex;
    align-items: center;
    gap: 10px;
    height: 34px;
    margin-left: 1px;
    padding: 0 11px 0 5px;
    border: 1px solid #d9dde0;
    border-radius: 4px;

    .temperature {
        display: flex;
        flex: 1;
        align-items: center;
        gap: 5px;
        height: 22px;
        margin-left: 12px;
        border-right: 1px solid #a0a0a0;
        font-size: 12px;
    }

    .temperature + button {
        margin-left: -3px;
    }
`;

const DriveBox = styled.div`
    position: relative;
    width: 237px;

    select {
        display: block;
        width: 100%;
        height: 21px;
        padding-left: 3px;
        border: 1px solid #707070;
        border-radius: 2px;
        background: linear-gradient(#f2f2f2, #ebebeb 50%, #dddddd 50%, #cfcfcf);
        font-size: 11px;
        color: #000;
        appearance: none;
    }

    span {
        position: absolute;
        top: 9px;
        right: 4px;
        pointer-events: none;
    }
`;

const ExitButton = styled.button`
    display: flex;
    align-items: center;
    gap: 5px;
    height: 22px;
    margin-left: -3px;
    padding-left: 13px;
    border: none;
    border-left: 1px solid #a0a0a0;
    background: none;
    font-size: 11px;
`;

const DialogTabs = styled.div`
    display: flex;
    align-items: flex-end;
    margin: 5px 0 -1px 1px;
`;

const DialogTab = styled.button`
    position: relative;
    display: flex;
    align-items: center;
    justify-content: center;
    gap: ${(props) => (props.$width > 83 ? 9 : 6)}px;
    width: ${(props) => props.$width}px;
    height: ${(props) => (props.$active ? 21 : 19)}px;
    border: 1px solid #898c95;
    border-bottom-color: ${(props) => (props.$active ? '#fff' : '#898c95')};
    background: ${(props) => (props.$active ? '#fff' : 'linear-gradient(#f2f2f2, #ebebeb 50%, #dddddd 50%, #d4d4d4)')};
    font-size: 11px;
    line-height: 14px;

    & + & {
        border-left-width: ${(props) => (props.$active ? 1 : 0)}px;
    }
`;

const ScanPanel = styled.div`
    display: flex;
    justify-content: space-between;
    min-height: 361px;
    margin-right: 1px;
    padding: 12px 2px 0 8px;
    border: 1px solid #898c95;
    background: #fff;

    aside {
        width: 112px;
    }
`;

const BlockMap = styled.div`
    width: 401px;
    height: 301px;
    margin-top: 9px;
    background:
        linear-gradient(#000 1px, transparent 1px) 0 0 / 8px 6px,
        linear-gradient(90deg, #000 1px, transparent 1px) 0 0 / 8px 6px,
        #00ff00;
`;

const StartButton = styled.button`
    display: block;
    width: 73px;
    height: 21px;
    margin-left: 19px;
    border: 1px solid #2c82ab;
    border-radius: 3px;
    background: linear-gradient(#f2f2f2, #ebebeb 50%, #d6dde0 50%, #cdd3d6);
    box-shadow: inset 0 0 0 1px #6fc6e8;
    font-size: 11px;
    line-height: 14px;
`;

const CheckLabel = styled.label`
    display: flex;
    align-items: center;
    gap: 3px;
    margin: 8px 0 4px 15px;

    input {
        width: 13px;
        height: 13px;
        border: 1px solid #8e8f8f;
        background: linear-gradient(135deg, #cbcfd5, #f6f6f6);
        box-shadow: inset 0 0 0 2px #f4f4f4;
        appearance: none;
    }
`;

const LegendStyled = styled.fieldset`
    margin: 0 0 5px;
    padding: 0 0 0 14px;
    border: 1px solid #d5dfe5;
    border-radius: 4px;

    legend {
        margin-left: -8px;
        padding: 0 3px;
        line-height: 12px;
    }

    ul {
        list-style: none;
    }

    li {
        display: flex;
        align-items: center;
        gap: 2px;
        height: 26px;
    }
`;

const Swatch = styled.i`
    width: 8px;
    height: 8px;
    border: 1px solid #000;
    background: ${(props) => props.$color};
`;

const StatsStyled = styled.dl`
    padding: 9px 12px 0 14px;
    border: 1px solid #d5dfe5;
    border-radius: 4px;
    line-height: 18px;
    white-space: nowrap;

    dd {
        margin-bottom: 8px;
        font-size: 12px;
        font-weight: bold;
        text-align: right;
    }
`;

const TaskbarStyled = styled.footer`
    display: flex;
    align-items: stretch;
    height: 41px;
    border-top: 1px solid #000;
    background: linear-gradient(90deg, #c25307, #ff6c06 75px, #ff6c06 60%, #ff7a1a 68%, #ff6a00 72%, #ff6a00 82%, #c2560f 87%, #c2560f);
    box-shadow: inset 0 1px 0 #ffb27a;
`;

const TaskButton = styled.button`
    display: flex;
    align-items: center;
    justify-content: center;
    width: ${(props) => props.$width}px;
    margin: 1px ${(props) => (props.$stacked ? 8 : props.$open ? 3 : 0)}px 0 0;
    border: ${(props) => (props.$open ? '1px solid #8a3b0a' : 'none')};
    border-radius: 3px;
    background: ${(props) => {
        if (props.$focused) return 'linear-gradient(160deg, #ffe0ca, #ffb686 55%, #ff9c5e)';
        return props.$open ? 'linear-gradient(160deg, #ffc8a2, #ff9a58 50%, #ff7d2b)' : 'none';
    }};
    box-shadow: ${(props) => (props.$open ? 'inset 0 0 0 1px #ffcfae' : 'none')}${(props) => (props.$stacked ? ', 3px 0 0 #ff8a40, 4px 0 0 #8a3b0a' : '')};
`;

const TrayStyled = styled.div`
    display: flex;
    align-items: center;
    gap: 7px;
    margin-left: auto;
    font: 11px/17px ${segoe};
    color: #fff;

    .lang {
        margin: 0 9px 4px 0;
    }

    > svg:first-of-type {
        margin-right: 6px;
    }

    time {
        margin: 0 -2px 0 2px;
        text-align: center;
    }
`;

const ShowDesktop = styled.button`
    align-self: stretch;
    width: 14px;
    border: 1px solid #7b3204;
    background: linear-gradient(135deg, #e08a4c, #a9480a);
`;

export default App;
